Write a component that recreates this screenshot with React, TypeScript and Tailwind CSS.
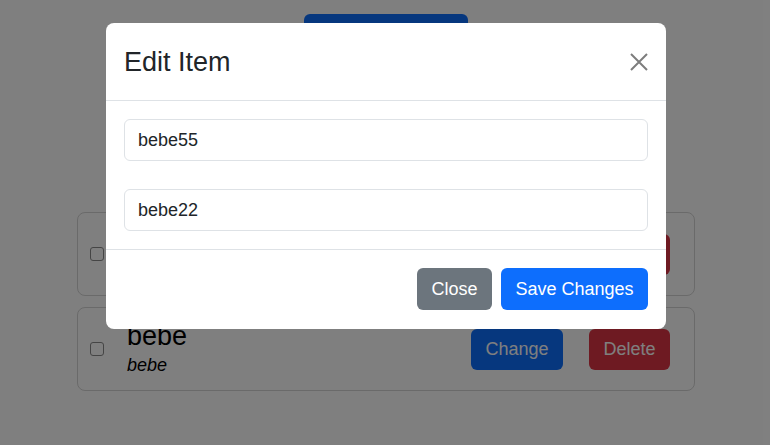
import React from 'react'

type Item = { title: string; note: string }

const items: Item[] = [
  { title: 'bebe', note: 'bebe' },
  { title: 'bebe', note: 'bebe' },
]

function ItemCard({ item }: { item: Item }) {
  return (
    <div className="w-[618px] h-[84px] border border-[#d4d4d4] rounded-[8px] flex items-center pl-[12px] pr-[24px]">
      <div className="w-[14px] h-[14px] border border-[#8a8a8a] rounded-[3px] bg-white" />
      <div className="ml-[23px] flex flex-col flex-1">
        <span className="text-[27px] leading-[31px] text-black">{item.title}</span>
        <span className="text-[18px] leading-[26px] italic text-black">{item.note}</span>
      </div>
      <button className="w-[92px] h-[41px] rounded-[6px] bg-[#0d6efd] text-white text-[18px]">Change</button>
      <button className="ml-[26px] w-[81px] h-[41px] rounded-[6px] bg-[#dc3545] text-white text-[18px]">Delete</button>
    </div>
  )
}

export default function App() {
  return (
    <div
      className="relative w-full h-[445px] overflow-hidden bg-white"
      style={{ fontFamily: '"Liberation Sans", Arial, sans-serif' }}
    >
      {/* Page behind the modal */}
      <div className="flex flex-col items-center pt-[14px] pl-[2px]">
        <button className="w-[164px] h-[42px] rounded-[6px] bg-[#0d6efd] text-white text-[18px]">Add Item</button>
        <div className="h-[156px]" />
        <div className="flex flex-col gap-[11px]">
          {items.map((item, i) => (
            <ItemCard key={i} item={item} />
          ))}
        </div>
      </div>

      {/* Backdrop */}
      <div className="absolute inset-0 bg-black/50" />

      {/* Modal */}
      <div className="absolute left-[106px] top-[23px] w-[560px] rounded-[8px] bg-white text-[#212529]">
        <div className="h-[78px] px-[18px] flex items-center justify-between border-b border-[#dee2e6]">
          <h4 className="text-[27px] leading-[32px]">Edit Item</h4>
          <button className="w-[18px] h-[18px] flex items-center justify-center">
            <svg width="18" height="18" viewBox="0 0 18 18">
              <path d="M1 1L17 17M17 1L1 17" stroke="#7d7d7d" strokeWidth="2" />
            </svg>
          </button>
        </div>
        <div className="p-[18px] flex flex-col gap-[28px]">
          <input
            defaultValue="bebe55"
            className="h-[42px] w-full border border-[#dee2e6] rounded-[6px] px-[13px] text-[18px] text-[#212529] outline-none"
          />
          <input
            defaultValue="bebe22"
            className="h-[42px] w-full border border-[#dee2e6] rounded-[6px] px-[13px] text-[18px] text-[#212529] outline-none"
          />
        </div>
        <div className="border-t border-[#dee2e6] px-[18px] pt-[18px] pb-[19px] flex justify-end gap-[9px]">
          <button className="w-[75px] h-[42px] rounded-[6px] bg-[#6c757d] text-white text-[18px]">Close</button>
          <button className="w-[147px] h-[42px] rounded-[6px] bg-[#0d6efd] text-white text-[18px]">Save Changes</button>
        </div>
      </div>
    </div>
  )
}
